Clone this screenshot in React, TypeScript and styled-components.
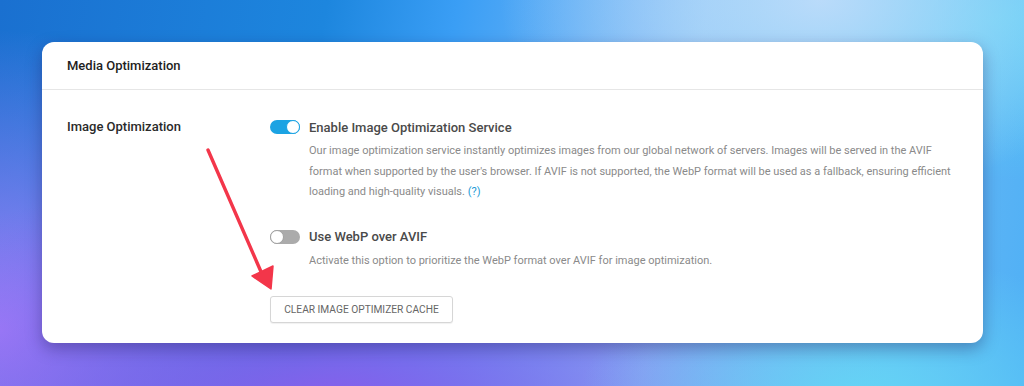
import React from 'react'
import styled, { createGlobalStyle } from 'styled-components'

const GlobalStyle = createGlobalStyle`
  html, body {
    margin: 0;
    padding: 0;
  }
  body {
    font-family: Roboto, "Liberation Sans", sans-serif;
  }
`

function Toggle({ on }: { on: boolean }) {
  return (
    <Track $on={on}>
      <Knob $on={on} />
    </Track>
  )
}

function App() {
  return (
    <>
      <GlobalStyle />
      <Page>
        <Card>
          <CardHeader>Media Optimization</CardHeader>
          <CardBody>
            <Label>Image Optimization</Label>
            <Options>
              <OptionRow>
                <Toggle on />
                <OptionTitle>Enable Image Optimization Service</OptionTitle>
              </OptionRow>
              <Description>
                Our image optimization service instantly optimizes images from our global network of servers. Images will be served in the AVIF
                format when supported by the user's browser. If AVIF is not supported, the WebP format will be used as a fallback, ensuring efficient
                loading and high-quality visuals. <HelpLink>(?)</HelpLink>
              </Description>
              <OptionRow $spaced>
                <Toggle on={false} />
                <OptionTitle>Use WebP over AVIF</OptionTitle>
              </OptionRow>
              <Description $tight>
                Activate this option to prioritize the WebP format over AVIF for image optimization.
              </Description>
              <ClearButton>Clear Image Optimizer Cache</ClearButton>
            </Options>
          </CardBody>
        </Card>
        <Arrow width="1024" height="386" viewBox="0 0 1024 386">
          <line x1="208" y1="150" x2="262" y2="274" stroke="#f3364a" strokeWidth="3.4" strokeLinecap="round" />
          <polygon points="271,289 252,276 273,266" fill="#f3364a" stroke="#f3364a" strokeWidth="1.5" strokeLinejoin="round" />
        </Arrow>
      </Page>
    </>
  )
}

export default App

const Page = styled.div`
  position: relative;
  width: 1024px;
  height: 386px;
  box-sizing: border-box;
  padding: 42px 41px 0 42px;
  overflow: hidden;
  background:
    radial-gradient(ellipse 320px 200px at 820px 0px, rgba(190, 220, 250, 0.95), rgba(190, 220, 250, 0) 100%),
    radial-gradient(ellipse 360px 160px at 1000px 20px, rgba(90, 210, 245, 0.9), rgba(90, 210, 245, 0) 100%),
    radial-gradient(ellipse 280px 150px at 860px 400px, rgba(100, 215, 245, 0.95), rgba(100, 215, 245, 0) 100%),
    radial-gradient(ellipse 560px 230px at 330px 400px, rgba(135, 95, 235, 1), rgba(135, 95, 235, 0) 100%),
    radial-gradient(ellipse 300px 300px at 0px 330px, rgba(160, 130, 250, 1), rgba(160, 130, 250, 0) 100%),
    linear-gradient(100deg, #1a70d0 0%, #1d86de 30%, #3a9ef5 42%, #8cc2f6 65%, #4fb0f5 100%);
`

const Card = styled.div`
  position: relative;
  width: 941px;
  height: 301px;
  background: #fff;
  border-radius: 12px;
  box-shadow: 0 6px 16px rgba(30, 20, 80, 0.35);
  display: flex;
  flex-direction: column;
`

const CardHeader = styled.div`
  height: 49px;
  padding: 0 25px;
  display: flex;
  align-items: center;
  border-bottom: 1px solid #e6e6e6;
  font-size: 13px;
  font-weight: 500;
  color: #1e1e1e;
`

const CardBody = styled.div`
  display: flex;
  padding: 27px 25px 20px 25px;
`

const Label = styled.div`
  width: 203px;
  flex-shrink: 0;
  font-size: 13px;
  font-weight: 500;
  line-height: 20px;
  color: #2a2a2a;
`

const Options = styled.div`
  display: flex;
  flex-direction: column;
  align-items: flex-start;
`

const OptionRow = styled.div<{ $spaced?: boolean }>`
  display: flex;
  align-items: center;
  gap: 9px;
  height: 20px;
  margin-top: ${p => (p.$spaced ? '24px' : '0')};
`

const Track = styled.div<{ $on: boolean }>`
  position: relative;
  width: 30px;
  height: 14px;
  border-radius: 7px;
  background: ${p => (p.$on ? '#1ba3e3' : '#ababab')};
`

const Knob = styled.div<{ $on: boolean }>`
  position: absolute;
  top: 0;
  left: ${p => (p.$on ? '16px' : '0')};
  width: 12px;
  height: 12px;
  border-radius: 50%;
  background: #fff;
  border: 1px solid ${p => (p.$on ? '#1ba3e3' : '#a0a0a0')};
`

const OptionTitle = styled.span`
  font-size: 13px;
  font-weight: 500;
  color: #4a4a4a;
`

const Description = styled.p<{ $tight?: boolean }>`
  margin: 4px 0 0 39px;
  font-size: 11px;
  line-height: 20.5px;
  color: #8a8a8a;
`

const HelpLink = styled.a`
  color: #1e9ad6;
  text-decoration: none;
`

const ClearButton = styled.button`
  margin-top: 25px;
  width: 183px;
  height: 27px;
  background: #fff;
  border: 1px solid #d6d6d6;
  border-radius: 3px;
  box-shadow: 0 1px 1px rgba(0, 0, 0, 0.06);
  font-family: Roboto, "Liberation Sans", sans-serif;
  font-size: 10.2px;
  text-transform: uppercase;
  color: #666;
  padding: 0;
`

const Arrow = styled.svg`
  position: absolute;
  left: 0;
  top: 0;
  pointer-events: none;
`
